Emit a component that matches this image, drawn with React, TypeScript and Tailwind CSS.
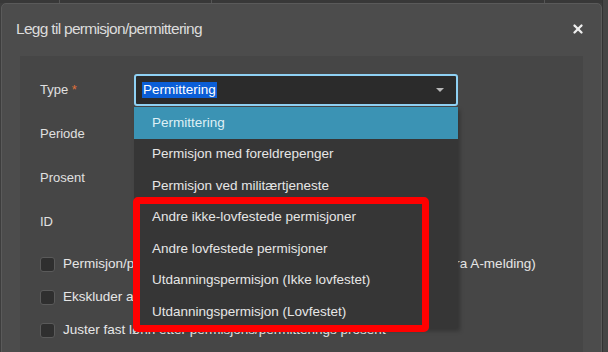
import { X } from 'lucide-react'

const options = [
  'Permittering',
  'Permisjon med foreldrepenger',
  'Permisjon ved militærtjeneste',
  'Andre ikke-lovfestede permisjoner',
  'Andre lovfestede permisjoner',
  'Utdanningspermisjon (Ikke lovfestet)',
  'Utdanningspermisjon (Lovfestet)',
]

const checks = [
  'Permisjon/permittering skal ikke overstyres ved import (importert fra A-melding)',
  'Ekskluder antall dager fra ferieberegning',
  'Juster fast lønn etter permisjons/permitterings prosent',
]

function Row({ label }: { label: string }) {
  return (
    <div className="flex h-8 items-center">
      <span className="w-[94px] text-[13px] text-[#e0e0e0]">{label}</span>
    </div>
  )
}

export default function App() {
  return (
    <div className="relative h-[352px] w-[608px] overflow-hidden bg-[#3d3d3d] font-['Liberation_Sans',Arial,sans-serif]">
      {/* background page behind modal */}
      <div className="flex h-[3px] bg-[#383838]">
        <div className="w-[60px] border-r border-[#555]" />
        <div className="w-[152px] border-r border-[#555]" />
        <div className="w-[333px] border-r border-[#555]" />
      </div>
      <div className="absolute right-0 top-0 h-full w-[6px] border-l border-[#333] bg-[#454545]" />

      {/* modal */}
      <div className="ml-[1px] h-[360px] w-[601px] rounded-t-[5px] border border-[#5a5a5a] bg-[#4c4c4c]">
        <div className="flex h-[52px] items-center justify-between pl-[14px] pr-[16px] pb-[2px]">
          <h2 className="text-[15.5px] tracking-[-0.7px] text-[#dcdcdc]">Legg til permisjon/permittering</h2>
          <X className="h-[14px] w-[14px] text-[#eeeeee]" strokeWidth={4} />
        </div>

        <div className="relative mx-[18px] h-[300px] bg-[#464646] px-5 pt-[18px]">
          <div className="flex flex-col gap-3">
            <div className="flex h-8 items-center">
              <span className="w-[94px] text-[13px] text-[#e0e0e0]">
                Type <span className="text-[#e0703a]">*</span>
              </span>
              <div className="relative flex h-[32px] w-[324px] items-center rounded-[3px] border-2 border-[#8fd1f4] bg-[#2b2b2b] pl-[6px]">
                <span className="bg-[#0b5ed6] px-[1px] text-[13.5px] leading-4 text-white">Permittering</span>
                <svg className="absolute right-[12px] top-[12px]" width="8" height="5" viewBox="0 0 8 5">
                  <path d="M0 0h8L4 4z" fill="#b8b8b8" />
                </svg>

                {/* open dropdown */}
                <div className="absolute left-[-2px] top-[31px] z-10 w-[324px] bg-[#363636] shadow-[2px_3px_4px_rgba(0,0,0,0.25)]">
                  {options.map((o, i) => (
                    <div
                      key={o}
                      className={`flex h-[31.5px] items-center pl-[18px] text-[13.5px] ${
                        i === 0 ? 'bg-[#3b93b4] text-[#dff0f6]' : 'text-[#e6e6e6]'
                      }`}
                    >
                      {o}
                    </div>
                  ))}
                </div>
              </div>
            </div>
            <Row label="Periode" />
            <Row label="Prosent" />
            <Row label="ID" />
          </div>

          <div className="mt-[19px] flex flex-col gap-[18px]">
            {checks.map((c) => (
              <label key={c} className="flex h-[15px] items-center gap-[8px]">
                <span className="h-[15px] w-[15px] shrink-0 rounded-[3px] border border-[#5a5a5a] bg-[#2f2f2f]" />
                <span className="whitespace-nowrap text-[13.5px] text-[#e6e6e6]">{c}</span>
              </label>
            ))}
          </div>

          {/* annotation box */}
          <div className="absolute left-[113px] top-[141px] z-20 h-[135px] w-[296px] rounded-[5px] border-[7px] border-[#ff0000]" />
        </div>
      </div>
    </div>
  )
}
